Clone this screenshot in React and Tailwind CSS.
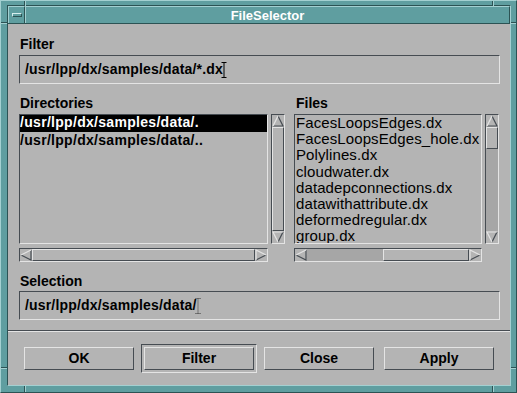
import React from "react"

const inset = "border border-t-[#464c52] border-l-[#464c52] border-b-[#e4e4e4] border-r-[#e4e4e4]"
const outset = "border border-t-[#e4e4e4] border-l-[#e4e4e4] border-b-[#464c52] border-r-[#464c52]"

const LIGHT = "#e4e4e4"
const DARK = "#464c52"

function Arrow({ dir }) {
  // motif style arrow heads: light on the lit side, dark on the shaded side
  const shapes = {
    up: { fill: "6,1 11,11 1,11", light: "M1 11 L6 1", dark: "M6 1 L11 11 L1 11" },
    down: { fill: "1,1 11,1 6,11", light: "M6 11 L1 1 L11 1", dark: "M11 1 L6 11" },
    left: { fill: "1,6 11,1 11,11", light: "M1 6 L11 1", dark: "M11 1 L11 11 L1 6" },
    right: { fill: "1,1 11,6 1,11", light: "M1 11 L1 1 L11 6", dark: "M11 6 L1 11" },
  }
  const s = shapes[dir]
  return (
    <svg width="12" height="12" viewBox="0 0 12 12" className="shrink-0 block">
      <polygon points={s.fill} fill="#b4b4b4" />
      <path d={s.dark} stroke={DARK} strokeWidth="1.2" fill="none" />
      <path d={s.light} stroke={LIGHT} strokeWidth="1.2" fill="none" />
    </svg>
  )
}

function IBeam({ dotted }) {
  return (
    <svg width="6" height="16" viewBox="0 0 6 16" className="inline-block shrink-0 -ml-[2px]">
      <path
        d="M0.5 0.5 H5.5 M3 0.5 V15.5 M0.5 15.5 H5.5"
        stroke={dotted ? "#333" : "#000"}
        strokeWidth="1"
        strokeDasharray={dotted ? "1 1" : undefined}
        fill="none"
      />
    </svg>
  )
}

function Button({ children }) {
  return (
    <div className={`${outset} w-[110px] h-[23px] flex items-center justify-center text-[14px] font-bold text-black`}>
      {children}
    </div>
  )
}

const dirs = ["/usr/lpp/dx/samples/data/.", "/usr/lpp/dx/samples/data/.."]
const files = [
  "FacesLoopsEdges.dx",
  "FacesLoopsEdges_hole.dx",
  "Polylines.dx",
  "cloudwater.dx",
  "datadepconnections.dx",
  "datawithattribute.dx",
  "deformedregular.dx",
  "group.dx",
]

export default function App() {
  return (
    <div className="relative w-[517px] h-[393px] bg-[#5f9ea0] border border-t-[#a3d0d1] border-l-[#a3d0d1] border-b-[#2c5354] border-r-[#2c5354] pt-[4px] pl-[6px] pr-[5px] pb-[6px] font-['Liberation_Sans',Arial,sans-serif]">
      {/* frame corner marks */}
      <div className="absolute top-0 left-[23px] w-px h-[5px] bg-[#2c5354]" />
      <div className="absolute top-0 left-[24px] w-px h-[5px] bg-[#a3d0d1]" />
      <div className="absolute top-0 left-[491px] w-px h-[5px] bg-[#2c5354]" />
      <div className="absolute top-0 left-[492px] w-px h-[5px] bg-[#a3d0d1]" />
      <div className="absolute bottom-0 left-[23px] w-px h-[6px] bg-[#2c5354]" />
      <div className="absolute bottom-0 left-[24px] w-px h-[6px] bg-[#a3d0d1]" />
      <div className="absolute bottom-0 left-[491px] w-px h-[6px] bg-[#2c5354]" />
      <div className="absolute bottom-0 left-[492px] w-px h-[6px] bg-[#a3d0d1]" />
      <div className="absolute left-0 top-[21px] w-[6px] h-px bg-[#2c5354]" />
      <div className="absolute left-0 top-[22px] w-[6px] h-px bg-[#a3d0d1]" />
      <div className="absolute left-0 top-[366px] w-[6px] h-px bg-[#2c5354]" />
      <div className="absolute left-0 top-[367px] w-[6px] h-px bg-[#a3d0d1]" />
      <div className="absolute right-0 top-[21px] w-[5px] h-px bg-[#2c5354]" />
      <div className="absolute right-0 top-[22px] w-[5px] h-px bg-[#a3d0d1]" />
      <div className="absolute right-0 top-[366px] w-[5px] h-px bg-[#2c5354]" />
      <div className="absolute right-0 top-[367px] w-[5px] h-px bg-[#a3d0d1]" />

      <div className="flex flex-col h-full border border-t-[#2c5354] border-l-[#2c5354] border-b-[#a3d0d1] border-r-[#a3d0d1]">
        {/* title bar */}
        <div className="flex h-[18px] shrink-0 border-b border-b-[#2c5354]">
          <div className="w-[17px] flex items-center justify-center border-t border-l border-r border-t-[#a3d0d1] border-l-[#a3d0d1] border-r-[#2c5354]">
            <div className="w-[10px] h-[4px] border border-t-[#d6eeee] border-l-[#d6eeee] border-b-[#2c5354] border-r-[#2c5354]" />
          </div>
          <div className="flex-1 flex items-center justify-center border-t border-l border-r border-t-[#a3d0d1] border-l-[#a3d0d1] border-r-[#2c5354] text-white font-bold text-[13px] leading-none">
            FileSelector
          </div>
        </div>

        {/* client area */}
        <div className="flex-1 bg-[#b4b4b4] flex flex-col text-black">
          <div className="pl-[11px] pr-[10px] pt-[12px]">
            <div className="h-[16px] leading-[16px] text-[14px] font-bold pl-[1px]">Filter</div>
            <div className={`${inset} mt-[3px] h-[29px] flex items-center pl-[5px] text-[14px] font-bold tracking-[0.17px]`}>
              <span>/usr/lpp/dx/samples/data/*.dx</span>
              <IBeam />
            </div>

            <div className="mt-[11px] flex">
              {/* directories */}
              <div className="flex flex-col">
                <div className="h-[16px] leading-[16px] text-[14px] font-bold pl-[1px]">Directories</div>
                <div className="mt-[3px] flex gap-[3px]">
                  <div className={`${inset} w-[249px] h-[130px] overflow-hidden text-[14px] font-bold tracking-[0.3px]`}>
                    {dirs.map((d, i) => (
                      <div
                        key={d}
                        className={
                          i === 0
                            ? "h-[17px] leading-[15px] bg-black text-white whitespace-nowrap"
                            : "h-[17px] leading-[15px] mt-px whitespace-nowrap"
                        }
                      >
                        {d}
                      </div>
                    ))}
                  </div>
                  <div className={`${inset} w-[14px] h-[130px] flex flex-col`}>
                    <Arrow dir="up" />
                    <div className={`${outset} flex-1`} />
                    <Arrow dir="down" />
                  </div>
                </div>
                <div className={`${inset} mt-[4px] w-[249px] h-[14px] flex`}>
                  <Arrow dir="left" />
                  <div className={`${outset} flex-1`} />
                  <Arrow dir="right" />
                </div>
              </div>

              {/* files */}
              <div className="flex flex-col ml-[9px]">
                <div className="h-[16px] leading-[16px] text-[14px] font-bold pl-[2px]">Files</div>
                <div className="mt-[3px] flex gap-[3px]">
                  <div className={`${inset} w-[188px] h-[130px] overflow-hidden pl-[1px] text-[15px] tracking-[0.1px] leading-[16.2px]`}>
                    {files.map((f) => (
                      <div key={f} className="whitespace-nowrap">
                        {f}
                      </div>
                    ))}
                  </div>
                  <div className={`${inset} w-[14px] h-[130px] flex flex-col`}>
                    <Arrow dir="up" />
                    <div className={`${outset} h-[22px] shrink-0`} />
                    <div className="flex-1 bg-[#a6a6a6]" />
                    <Arrow dir="down" />
                  </div>
                </div>
                <div className={`${inset} mt-[4px] w-[188px] h-[14px] flex`}>
                  <Arrow dir="left" />
                  <div className="w-[76px] bg-[#a6a6a6]" />
                  <div className={`${outset} flex-1`} />
                  <Arrow dir="right" />
                </div>
              </div>
            </div>

            <div className="mt-[11px] h-[16px] leading-[16px] text-[14px] font-bold pl-[1px]">Selection</div>
            <div className={`${inset} mt-[2px] h-[29px] flex items-center pl-[5px] text-[14px] font-bold tracking-[0.17px]`}>
              <span>/usr/lpp/dx/samples/data/</span>
              <IBeam dotted />
            </div>
          </div>

          {/* separator */}
          <div className="mt-[10px] h-[2px] border-t border-b border-t-[#464c52] border-b-[#e4e4e4]" />

          {/* action buttons */}
          <div className="mt-[15px] flex gap-[10px] pl-[16px]">
            <Button>OK</Button>
            <div className={`${inset} -m-[3px] p-[2px]`}>
              <Button>Filter</Button>
            </div>
            <Button>Close</Button>
            <Button>Apply</Button>
          </div>
        </div>
      </div>
    </div>
  )
}
